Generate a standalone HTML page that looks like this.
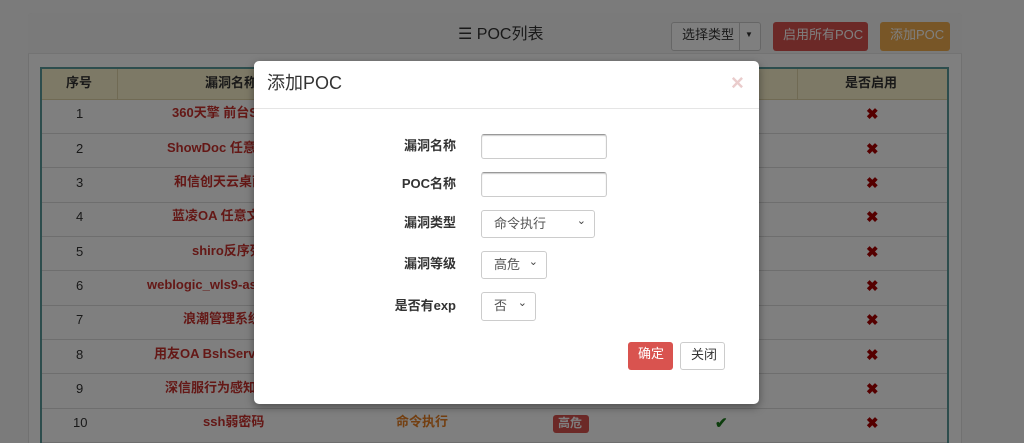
<!DOCTYPE html>
<html><head><meta charset="utf-8"><style>
*{box-sizing:border-box;margin:0;padding:0}
html,body{width:1024px;height:443px;overflow:hidden}
body{background:#f6f6f6;font-family:"Liberation Sans","Noto Sans CJK SC",sans-serif;font-size:13px;position:relative;line-height:1.15}
.a{position:absolute}
.panel{left:28px;top:13px;width:934px;height:440px;background:#fff;border:1px solid #e3e3e3;border-radius:4px}
.ph{left:28px;top:13px;width:934px;height:41px;background:#f5f5f5;border-bottom:1px solid #e6e6e6;border-radius:4px 4px 0 0}
.t{color:#333}
.row{left:42px;width:905px;height:34px;border-bottom:1px solid #ddd}
.n{color:#c9302c;font-weight:bold}
.x{color:#a00;font-weight:bold;font-size:15px}
.lab{width:180px;text-align:right;font-weight:bold;color:#333;font-size:13px}
.in{border:1px solid #ccc;border-radius:3px;background:#fff}
.in.t2{box-shadow:inset 0 1px 1px rgba(0,0,0,.2);border-top-color:#999}
.sel{color:#555;font-size:13px;padding:6px 0 0 12px}
.chev{position:absolute;right:8px;top:4px;color:#444;font-size:11px}
</style></head><body>
<div class="a panel"></div>
<div class="a ph"></div>
<div class="a" style="left:458px;top:26px;font-size:16px;color:#333">☰ POC列表</div>
<div class="a" style="left:671px;top:22px;width:90px;height:29px;border:1px solid #ccc;border-radius:3px;background:#fff"></div>
<div class="a" style="left:739px;top:22px;width:1px;height:29px;background:#ccc"></div>
<div class="a" style="left:682px;top:28px;color:#333">选择类型</div>
<div class="a" style="left:745px;top:30px;color:#333;font-size:8px">▼</div>
<div class="a" style="left:773px;top:22px;width:95px;height:29px;background:#d9534f;border-radius:3px;color:#fff;padding:6px 0 0 10px">启用所有POC</div>
<div class="a" style="left:880px;top:22px;width:70px;height:29px;background:#f0ad4e;border-radius:3px;color:#fff;padding:6px 0 0 10px">添加POC</div>
<div class="a" style="left:40px;top:67px;width:909px;height:380px;border:2px solid #5a9a9a;border-bottom:none"></div>
<div class="a" style="left:42px;top:69px;width:905px;height:31px;background:#faf2cc;border-bottom:1px solid #e0d4a8"></div>
<div class="a" style="left:117px;top:69px;width:1px;height:31px;background:#e0d4a8"></div>
<div class="a" style="left:797px;top:69px;width:1px;height:31px;background:#e0d4a8"></div>
<div class="a t" style="left:66px;top:76px;font-weight:bold">序号</div>
<div class="a t" style="left:205px;top:76px;font-weight:bold">漏洞名称</div>
<div class="a t" style="left:845px;top:76px;font-weight:bold">是否启用</div>
<div class="a row" style="top:100px"></div><div class="a row" style="top:134px"></div><div class="a row" style="top:169px"></div><div class="a row" style="top:203px"></div><div class="a row" style="top:237px"></div><div class="a row" style="top:272px"></div><div class="a row" style="top:306px"></div><div class="a row" style="top:340px"></div><div class="a row" style="top:375px"></div><div class="a row" style="top:409px"></div>
<div class="a t" style="left:76px;top:107px">1</div><div class="a n" style="left:172px;top:106px">360天擎 前台SQ</div><div class="a x" style="left:866px;top:106px">✖</div>
<div class="a t" style="left:76px;top:142px">2</div><div class="a n" style="left:167px;top:141px">ShowDoc 任意文</div><div class="a x" style="left:866px;top:141px">✖</div>
<div class="a t" style="left:76px;top:176px">3</div><div class="a n" style="left:174px;top:175px">和信创天云桌面</div><div class="a x" style="left:866px;top:175px">✖</div>
<div class="a t" style="left:76px;top:210px">4</div><div class="a n" style="left:172px;top:209px">蓝凌OA 任意文</div><div class="a x" style="left:866px;top:209px">✖</div>
<div class="a t" style="left:76px;top:245px">5</div><div class="a n" style="left:192px;top:244px">shiro反序列</div><div class="a x" style="left:866px;top:244px">✖</div>
<div class="a t" style="left:76px;top:279px">6</div><div class="a n" style="left:147px;top:278px">weblogic_wls9-asy</div><div class="a x" style="left:866px;top:278px">✖</div>
<div class="a t" style="left:76px;top:313px">7</div><div class="a n" style="left:183px;top:312px">浪潮管理系统</div><div class="a x" style="left:866px;top:312px">✖</div>
<div class="a t" style="left:76px;top:348px">8</div><div class="a n" style="left:154px;top:347px">用友OA BshServle</div><div class="a x" style="left:866px;top:347px">✖</div>
<div class="a t" style="left:76px;top:382px">9</div><div class="a n" style="left:165px;top:381px">深信服行为感知系</div><div class="a x" style="left:866px;top:381px">✖</div>
<div class="a t" style="left:73px;top:416px">10</div><div class="a n" style="left:203px;top:415px">ssh弱密码</div>
<div class="a" style="left:396px;top:415px;color:#e67e22;font-weight:bold">命令执行</div>
<div class="a" style="left:553px;top:415px;width:36px;height:18px;background:#d9534f;border-radius:3px;color:#fff;font-weight:bold;font-size:12px;padding:2px 0 0 5px">高危</div>
<div class="a" style="left:715px;top:415px;color:#1a7a1a;font-size:15px;font-weight:bold">✔</div>
<div class="a x" style="left:866px;top:415px">✖</div>
<div class="a" style="left:0;top:0;width:1024px;height:443px;background:rgba(0,0,0,.5)"></div>
<div class="a" style="left:254px;top:61px;width:505px;height:343px;background:#fff;border-radius:5px;box-shadow:0 3px 9px rgba(0,0,0,.4)"></div>
<div class="a" style="left:254px;top:108px;width:505px;height:1px;background:#e5e5e5"></div>
<div class="a" style="left:267px;top:73px;font-size:18px;color:#333">添加POC</div>
<div class="a" style="left:731px;top:72px;font-size:22px;color:#eacccc;font-weight:bold;line-height:1">×</div>
<div class="a lab" style="left:276px;top:139px">漏洞名称</div>
<div class="a lab" style="left:276px;top:177px">POC名称</div>
<div class="a lab" style="left:276px;top:216px">漏洞类型</div>
<div class="a lab" style="left:276px;top:257px">漏洞等级</div>
<div class="a lab" style="left:276px;top:299px">是否有exp</div>
<div class="a in t2" style="left:481px;top:134px;width:126px;height:25px"></div>
<div class="a in t2" style="left:481px;top:172px;width:126px;height:25px"></div>
<div class="a in sel" style="left:481px;top:210px;width:114px;height:28px">命令执行<span class="chev">⌄</span></div>
<div class="a in sel" style="left:481px;top:251px;width:66px;height:28px">高危<span class="chev">⌄</span></div>
<div class="a in sel" style="left:481px;top:292px;width:55px;height:29px">否<span class="chev">⌄</span></div>
<div class="a" style="left:628px;top:342px;width:45px;height:28px;background:#d9534f;border-radius:3px;color:#fff;padding:5px 0 0 10px">确定</div>
<div class="a" style="left:680px;top:342px;width:45px;height:28px;border:1px solid #ccc;border-radius:3px;color:#333;padding:5px 0 0 10px">关闭</div>
</body></html>
